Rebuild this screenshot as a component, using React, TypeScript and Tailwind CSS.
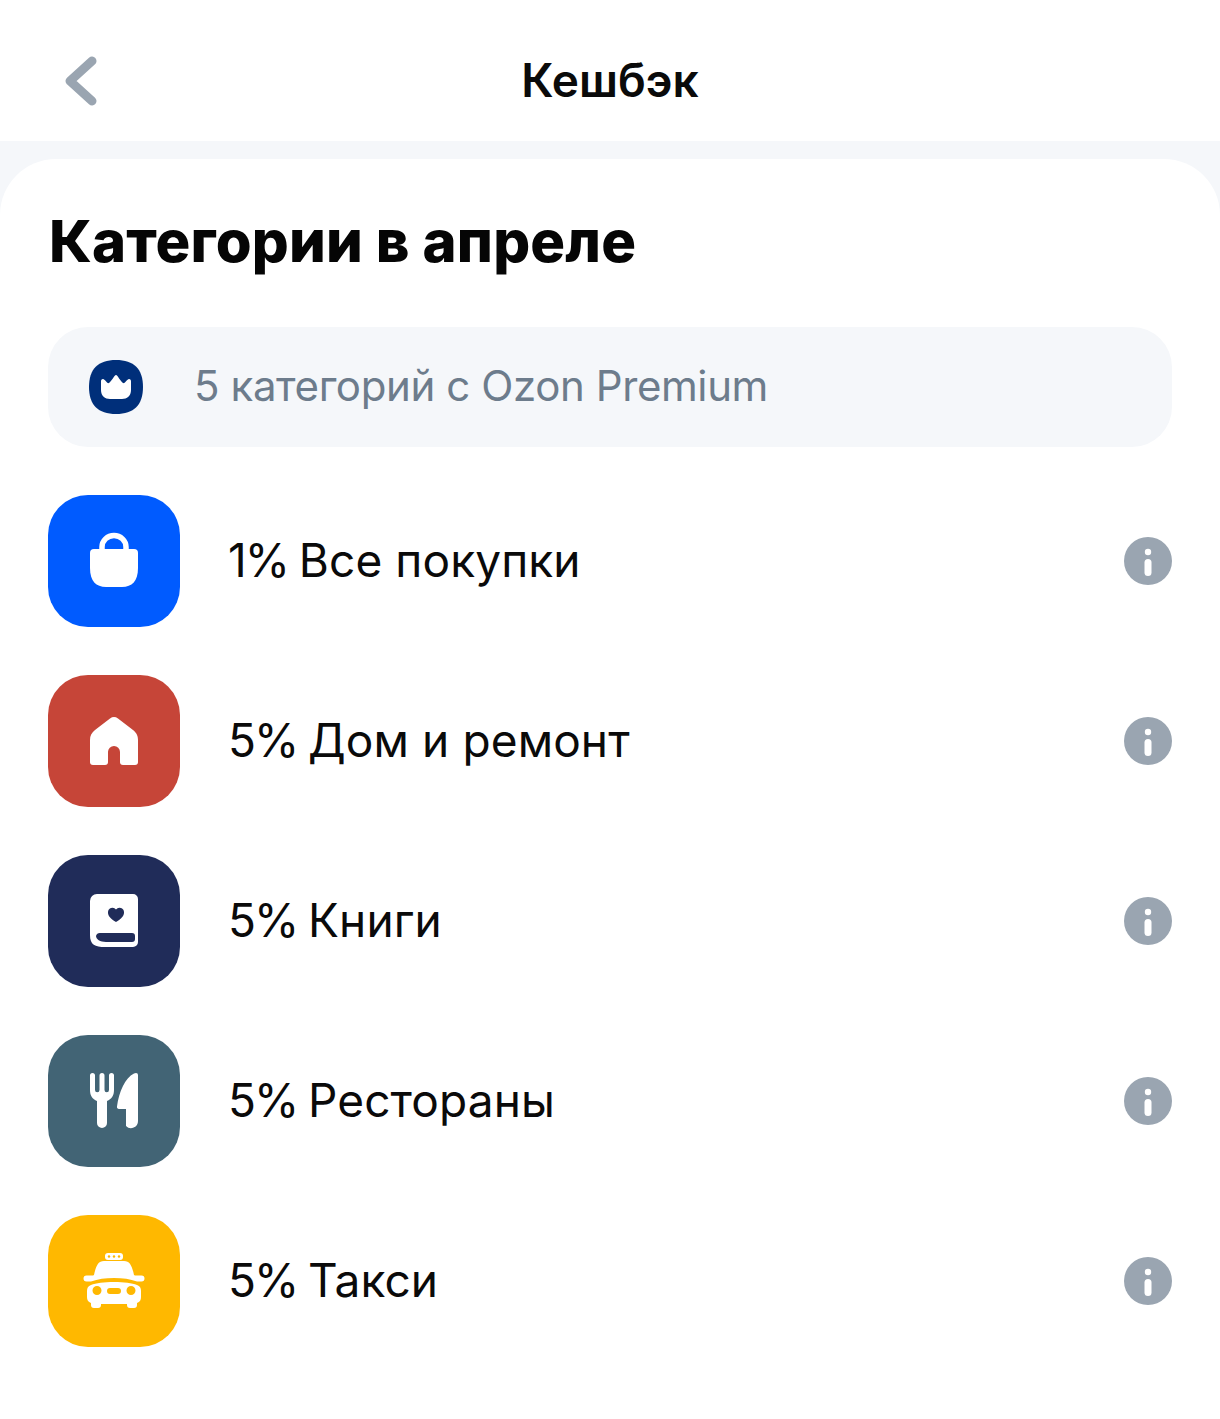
import React from 'react';

const font = { fontFamily: 'Inter, "Noto Sans", sans-serif' };

function BagIcon() {
  return (
    <svg width="72" height="72" viewBox="0 0 72 72" fill="none">
      <path d="M24 26v-4a12 11.500 0 0 1 24 0v4" stroke="#fff" strokeWidth="5.500" />
      <path d="M16 24h40a4 4 0 0 1 4 4v15c0 13-6 19-16 19H28c-10 0-16-6-16-19V28a4 4 0 0 1 4-4z" fill="#fff" />
    </svg>
  );
}

function HomeIcon() {
  return (
    <svg width="72" height="72" viewBox="0 0 72 72">
      <path
        d="M32 13.500a7 7 0 0 1 8 0L55 25c3.500 3 5 5.500 5 10v22a3 3 0 0 1-3 3H45a3 3 0 0 1-3-3V47a6 6 0 0 0-12 0v10a3 3 0 0 1-3 3H15a3 3 0 0 1-3-3V35c0-4.500 1.500-7 5-10z"
        fill="#fff"
      />
    </svg>
  );
}

function BookIcon() {
  return (
    <svg width="72" height="72" viewBox="0 0 72 72">
      <path
        fillRule="evenodd"
        d="M19 9h36a5 5 0 0 1 5 5v43a5 5 0 0 1-5 5H27c-10 0-15-2-15-12V16a7 7 0 0 1 7-7zM22 48a4 4 0 0 0-4 3c0 3 4 6 10 6h26a3 3 0 0 0 3-3v-3a3 3 0 0 0-3-3zM38 37c6-3.500 8-6.500 8-9.500a4.500 4.500 0 0 0-8-3 4.500 4.500 0 0 0-8 3c0 3 2 6 8 9.500z"
        fill="#fff"
      />
    </svg>
  );
}

function CutleryIcon() {
  return (
    <svg width="72" height="72" viewBox="0 0 72 72">
      <path
        d="M12 10.500a2.500 2.500 0 0 1 5 0V25a1.500 1.500 0 0 0 4.500 0V10.500a2.500 2.500 0 0 1 5 0V25a1.500 1.500 0 0 0 4.500 0V10.500a2.500 2.500 0 0 1 5 0V25c0 6-2.500 9-7 11v22a5 5 0 0 1-10 0V36c-4.500-2-7-5-7-11z"
        fill="#fff"
      />
      <path d="M58 8a2 2 0 0 1 2 2v46a7 7 0 0 1-12 5V44h-7a2 2 0 0 1-2-2.500C41 27 47 13 56 8.500z" fill="#fff" />
    </svg>
  );
}

function TaxiIcon() {
  return (
    <svg width="72" height="72" viewBox="0 0 72 72">
      <rect x="27" y="8" width="18" height="7" rx="3" fill="#fff" />
      <circle cx="31" cy="11.500" r="1.200" fill="#ffb800" />
      <circle cx="36" cy="11.500" r="1.200" fill="#ffb800" />
      <circle cx="41" cy="11.500" r="1.200" fill="#ffb800" />
      <path d="M26 16h20c6 0 8 5 10 14l1 .5h6.500a3 3 0 0 1 0 6H59c-7-2.500-14-3.500-23-3.500s-16 1-23 3.500H8.500a3 3 0 0 1 0-6H15l1-.5c2-9 4-14 10-14z" fill="#fff" />
      <path
        fillRule="evenodd"
        d="M36 37c10 0 18 1 23 3 3 1 4 3 4 6v6c0 3-1 5-4 6v2a3 3 0 0 1-3 3h-4a3 3 0 0 1-3-3v-1H23v1a3 3 0 0 1-3 3h-4a3 3 0 0 1-3-3v-2c-3-1-4-3-4-6v-6c0-3 1-5 4-6 5-2 13-3 23-3zM19 41a4.500 4.500 0 1 0 0 9 4.500 4.500 0 0 0 0-9zM53 41a4.500 4.500 0 1 0 0 9 4.500 4.500 0 0 0 0-9zM32 43a3 3 0 0 0 0 6h8a3 3 0 0 0 0-6z"
        fill="#fff"
      />
    </svg>
  );
}

function InfoIcon() {
  return (
    <svg width="48" height="48" viewBox="0 0 48 48">
      <circle cx="24" cy="24" r="24" fill="#9aa5b1" />
      <circle cx="24" cy="15" r="3.200" fill="#fff" />
      <rect x="20.500" y="22" width="7" height="17" rx="3.500" fill="#fff" />
    </svg>
  );
}

const rows = [
  { pct: '1%', text: 'Все покупки', bg: 'bg-[#005bff]', icon: <BagIcon /> },
  { pct: '5%', text: 'Дом и ремонт', bg: 'bg-[#c64538]', icon: <HomeIcon /> },
  { pct: '5%', text: 'Книги', bg: 'bg-[#202c59]', icon: <BookIcon /> },
  { pct: '5%', text: 'Рестораны', bg: 'bg-[#426475]', icon: <CutleryIcon /> },
  { pct: '5%', text: 'Такси', bg: 'bg-[#ffb800]', icon: <TaxiIcon /> },
];

export default function App() {
  return (
    <div className="w-[1220px] h-[1419px] bg-[#f5f7fa] overflow-hidden" style={font}>
      {/* Header */}
      <div className="h-[141px] bg-white pt-[20px] flex items-center px-[65px] relative">
        <svg width="32" height="50" viewBox="0 0 32 50" fill="none">
          <path d="M27 5 5 25l22 20" stroke="#9aa5b1" strokeWidth="9" strokeLinecap="round" strokeLinejoin="round" />
        </svg>
        <h1 className="absolute left-0 right-0 mt-[-2px] text-center text-[46px] leading-[56px] font-semibold text-[#0a0a0a]">
          Кешбэк
        </h1>
      </div>

      <div className="mt-[18px] h-[1260px] bg-white rounded-t-[56px] px-[48px] pt-[46px]">
        <h2 className="text-[58px] leading-[72px] font-extrabold tracking-[0.17px] text-[#050505] ml-[1px]">
          Категории в апреле
        </h2>

        <div className="mt-[50px] h-[120px] rounded-[40px] bg-[#f5f7fa] flex items-center pl-[41px]">
          <svg width="54" height="54" viewBox="0 0 54 54">
            <path d="M27 0C45 0 54 9 54 27S45 54 27 54 0 45 0 27 9 0 27 0z" fill="#002f7a" />
            <path
              d="M27 15c1.500 0 5 7 7 8s4-4 6-4c1.500 0 2 1 2 2.500V30c0 6-4 9-9 9H21c-5 0-9-3-9-9v-8.500c0-1.500.5-2.500 2-2.500 2 0 4 5 6 4s5.500-8 7-8z"
              fill="#fff"
            />
          </svg>
          <span className="ml-[51px] mb-[2px] text-[42px] leading-[52px] tracking-[-0.4px] text-[#6d7c8c]">
            5 категорий с Ozon Premium
          </span>
        </div>

        <div className="mt-[48px] flex flex-col gap-[48px]">
          {rows.map((r) => (
            <div key={r.text} className="flex items-center h-[132px]">
              <div className={`w-[132px] h-[132px] rounded-[40px] flex items-center justify-center ${r.bg}`}>
                {r.icon}
              </div>
              <span className="flex-1 ml-[48px] mb-[2px] text-[46px] leading-[56px] tracking-[0.1px] text-[#0a0a0a]">
                <span className="tracking-[-2px]">{r.pct} </span>
                {r.text}
              </span>
              <InfoIcon />
            </div>
          ))}
        </div>
      </div>
    </div>
  );
}
